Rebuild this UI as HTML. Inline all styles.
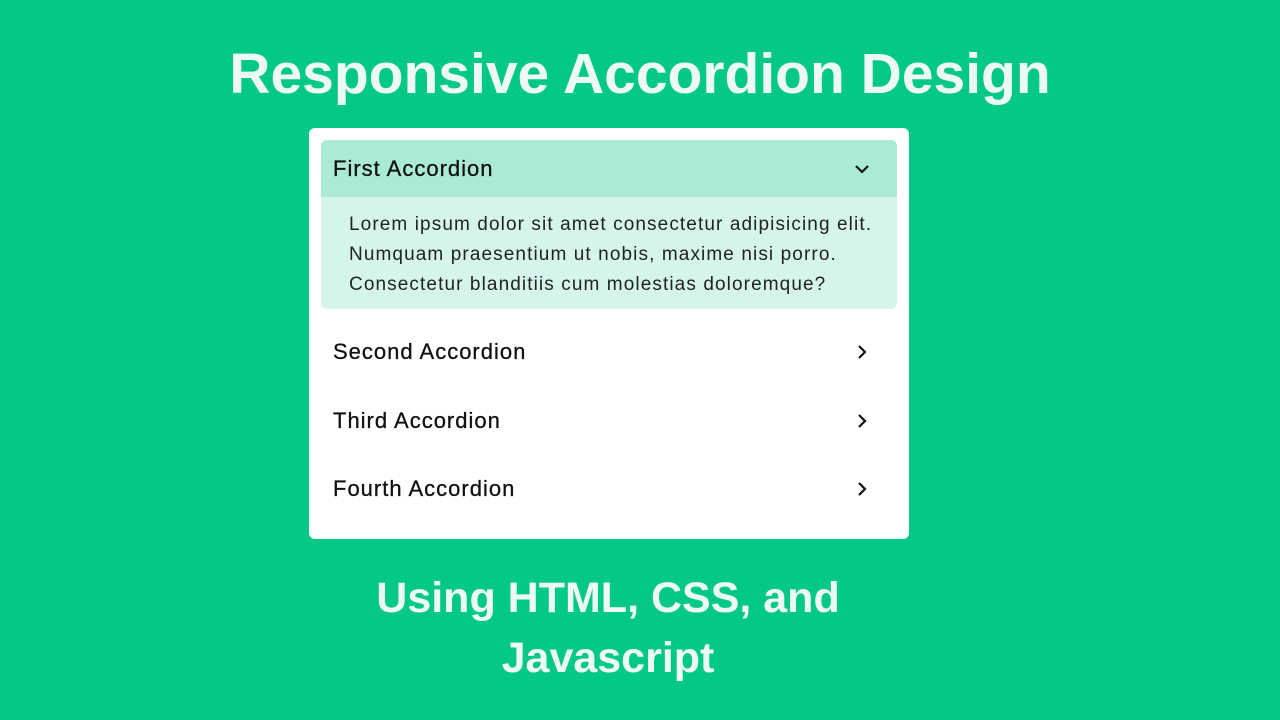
<!DOCTYPE html>
<html><head><meta charset="utf-8"><style>
body{margin:0;width:1280px;height:720px;background:#04c886;font-family:"Liberation Sans",sans-serif;position:relative;overflow:hidden}
.t{position:absolute;text-align:center;color:#ecfaf3;font-weight:bold}
.card{position:absolute;left:309px;top:128px;width:600px;height:411px;background:#fff;border-radius:6px}
.hd{position:absolute;left:12px;width:576px;height:57px;font-size:22px;letter-spacing:1px;color:#111;line-height:57px;text-indent:12px;-webkit-text-stroke:0.3px #111}
.open{top:12px;background:#abebd5;border-radius:6px 6px 0 0}
.body{position:absolute;left:12px;top:69px;width:576px;height:112px;background:#d6f5ea;border-radius:0 0 6px 6px;font-size:19px;letter-spacing:1.1px;line-height:30px;color:#222;padding:13px 0 0 28px;box-sizing:border-box;white-space:nowrap}
svg{position:absolute;left:532px;top:20px}
</style></head><body>
<div class="t" style="left:0;width:1280px;top:38px;font-size:57px;line-height:72px">Responsive Accordion Design</div>
<div class="card">
<div class="hd open">First Accordion<svg width="18" height="18" viewBox="0 0 18 18"><path d="M3 6l6 6 6-6" fill="none" stroke="#111" stroke-width="2.2"/></svg></div>
<div class="body">Lorem ipsum dolor sit amet consectetur adipisicing elit.<br>Numquam praesentium ut nobis, maxime nisi porro.<br>Consectetur blanditiis cum molestias doloremque?</div>
<div class="hd" style="top:195px">Second Accordion<svg width="18" height="18" viewBox="0 0 18 18"><path d="M6 3l6 6-6 6" fill="none" stroke="#111" stroke-width="2.2"/></svg></div>
<div class="hd" style="top:264px">Third Accordion<svg width="18" height="18" viewBox="0 0 18 18"><path d="M6 3l6 6-6 6" fill="none" stroke="#111" stroke-width="2.2"/></svg></div>
<div class="hd" style="top:332px">Fourth Accordion<svg width="18" height="18" viewBox="0 0 18 18"><path d="M6 3l6 6-6 6" fill="none" stroke="#111" stroke-width="2.2"/></svg></div>
</div>
<div class="t" style="left:0;width:1216px;top:568px;font-size:43px;line-height:60px">Using HTML, CSS, and<br>Javascript</div>
</body></html>
